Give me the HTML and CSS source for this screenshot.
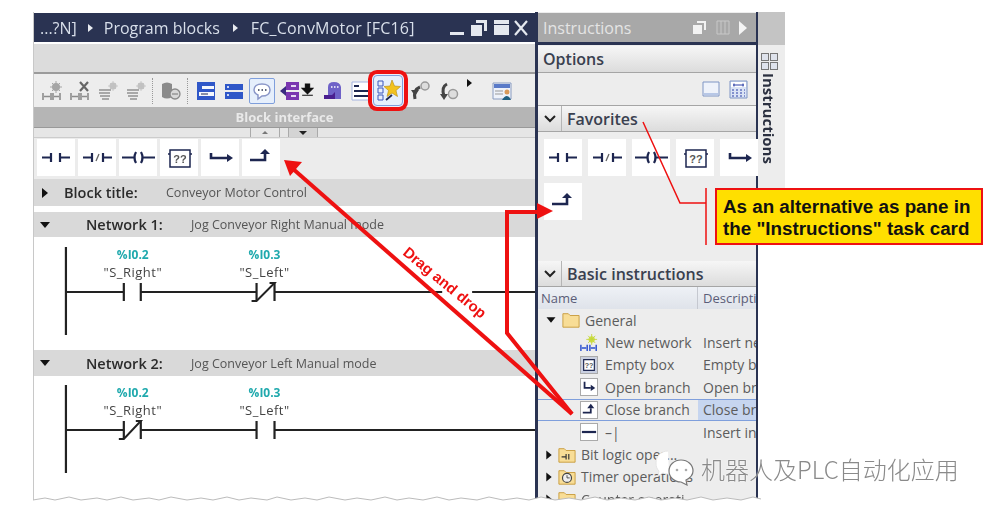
FILE: index.html
```html
<!DOCTYPE html>
<html lang="en">
<head>
    <meta charset="UTF-8">
    <title>Program blocks - FC_ConvMotor</title>
    <link rel="stylesheet" href="styles.css">
</head>
<body>
<svg class="defs" width="0" height="0">
    <symbol id="i-no" viewBox="0 0 38 37"><path d="M5 18.500h9M14 14v9M23 14v9M23 18.500h10" fill="none" stroke="#1d2650" stroke-width="2.200"/></symbol>
    <symbol id="i-nc" viewBox="0 0 38 37"><path d="M5 18.500h9M14 14v9M25 14v9M25 18.500h9" fill="none" stroke="#1d2650" stroke-width="2.200"/><path d="M18 22l3-7" stroke="#666" stroke-width="1.300"/></symbol>
    <symbol id="i-coil" viewBox="0 0 38 37"><path d="M3 18.500h12M24 18.500h12M17 13q-3 5.500 0 11M22 13q3 5.500 0 11" fill="none" stroke="#1d2650" stroke-width="2.200"/></symbol>
    <symbol id="i-box" viewBox="0 0 38 37"><path d="M10 11h20v17h-20zM8 15h2M30 15h2" fill="none" stroke="#1d2650" stroke-width="1.500"/><text x="20" y="24" class="box-text">??</text></symbol>
    <symbol id="i-open" viewBox="0 0 38 37"><path d="M10 14v5h16" fill="none" stroke="#1d2650" stroke-width="2.600"/><path d="M26 15l6 4-6 4z" fill="#1d2650"/></symbol>
    <symbol id="i-close" viewBox="0 0 38 37"><path d="M8 21h15v-6" fill="none" stroke="#1d2650" stroke-width="2.600"/><path d="M18 15l5-5 5 5z" fill="#1d2650"/></symbol>
    <symbol id="t-net" viewBox="0 0 20 20"><path d="M1 12v7M18 12v7M9 12v7M11 12v7" stroke="#8c8c8c" stroke-width="1.600" fill="none"/><path d="M2 15.500h6M12 15.500h5" stroke="#8c8c8c" stroke-width="1.600"/><circle cx="14" cy="6" r="4" fill="#a5a5a5"/><path d="M14 0v12M8 6h12M10 2l8 8M18 2l-8 8" stroke="#a5a5a5"/></symbol>
    <symbol id="t-netx" viewBox="0 0 20 20"><path d="M1 12v7M18 12v7M9 12v7M11 12v7" stroke="#8c8c8c" stroke-width="1.600" fill="none"/><path d="M2 15.500h6M12 15.500h5" stroke="#8c8c8c" stroke-width="1.600"/><path d="M10 1l8 9M18 1l-8 9" stroke="#666" stroke-width="2.200"/></symbol>
    <symbol id="t-lines" viewBox="0 0 20 20"><path d="M1 9h12M1 12h11M2 15h10M4 18h7" stroke="#a8a8a8" stroke-width="1.800"/><circle cx="15" cy="5" r="3.500" fill="#c2c2c2"/><path d="M15 0v10M10 5h10M12 2l6 6M18 2l-6 6" stroke="#c2c2c2" stroke-width=".8"/></symbol>
    <symbol id="t-db" viewBox="0 0 20 20"><path d="M1 3q5-3 10 0v13q-5 3-10 0z" fill="#8a8a8a"/><circle cx="14" cy="13" r="5" fill="#d8d8d8" stroke="#8a8a8a" stroke-width="1.300"/><path d="M11 13h6" stroke="#777"/></symbol>
    <symbol id="t-list" viewBox="0 0 20 20"><path d="M1 1h18v18h-18z" fill="#2f57c8"/><path d="M6 5h12v3h-12zM3 11h15v4h-15z" fill="#f4f7fd"/><path d="M5 13h7" stroke="#1d2650"/></symbol>
    <symbol id="t-list2" viewBox="0 0 20 20"><path d="M1 3h18v6h-18zM1 11h18v7h-18z" fill="#2f57c8"/><path d="M3 6h2M3 14h2" stroke="#fff" stroke-width="1.500"/></symbol>
    <symbol id="t-bubble" viewBox="0 0 20 20"><path d="M10 3c5 0 8 2.500 8 6s-3 6-8 6l-4 3v-4c-2-1-4-3-4-5 0-3.500 3-6 8-6z" fill="#fff" stroke="#8a96c8" stroke-width="1.500"/><path d="M6 9h1.500M9.500 9h1.500M13 9h1.500" stroke="#2a3352" stroke-width="1.500"/></symbol>
    <symbol id="t-tag" viewBox="0 0 20 20"><path d="M6 1h13v8h-13zM6 11h13v8h-13z" fill="#7a36b0"/><path d="M0 10l6-5v10z" fill="#3a2a80"/><path d="M11 5h5M11 15h5" stroke="#e6d8f2" stroke-width="2"/></symbol>
    <symbol id="t-ghost" viewBox="0 0 20 20"><path d="M5 6q0-5 6-5t7 5v12h-13z" fill="#6f62c8"/><path d="M8 6h1.500M11 6h1.500M14 6h1.500" stroke="#fff" stroke-width="1.500"/><path d="M1 14h8l3-3v7h-11z" fill="#4a1f90"/></symbol>
    <symbol id="t-lines2" viewBox="0 0 20 20"><path d="M1 1h18v18h-18z" fill="#fff" stroke="#a5b4e0"/><path d="M3 5h5M3 10h15M3 15h15" stroke="#1d2650" stroke-width="2"/></symbol>
    <symbol id="t-fav" viewBox="0 0 26 26"><path d="M3 3h5v5h-5zM3 10h5v5h-5zM3 17h5v5h-5z" fill="#e8eefb" stroke="#3a57bd"/><path d="M17 2l2.500 6 6 .500-4.500 4 1.500 6-5.500-3.500-5 3.500 1.500-6-4.500-4 6-.500z" fill="#f2c21f" stroke="#b58a10" stroke-width=".6"/><path d="M11 22l6-5" stroke="#1d2650" stroke-width="1.800"/></symbol>
    <symbol id="t-undo" viewBox="0 0 20 20"><path d="M4 18q-2-9 5-12" fill="none" stroke="#444" stroke-width="3"/><path d="M0 9h8l-4 6z" fill="#444"/><circle cx="14" cy="5" r="4" fill="#ddd" stroke="#999" stroke-width="1.500"/></symbol>
    <symbol id="t-redo" viewBox="0 0 20 20"><path d="M8 3q-6 3-3 12" fill="none" stroke="#444" stroke-width="3"/><path d="M1 13h8l-4 6z" fill="#444"/><circle cx="14" cy="13" r="4.500" fill="#ddd" stroke="#999" stroke-width="1.500"/></symbol>
    <symbol id="t-panel" viewBox="0 0 20 20"><path d="M1 2h18v16h-18z" fill="#eef2fa" stroke="#8a9cc0"/><path d="M2 3h16v4h-16z" fill="#5a7ac8"/><path d="M3 10h8M3 13h8" stroke="#999"/><circle cx="15" cy="11" r="2.500" fill="#d99a5a"/><path d="M10 19q5-8 9 0z" fill="#1f5f80"/></symbol>
    <symbol id="f-folder" viewBox="0 0 20 20"><path d="M1 3h6l2 2h10v13h-18z" fill="#f8dd96" stroke="#c79a3a"/></symbol>
</svg>

<div class="page">
    <div class="frame">
        <section class="editor">
            <header class="titlebar">
                <span class="crumb">...?N]</span><span class="crumb-arrow"></span>
                <span class="crumb">Program blocks</span><span class="crumb-arrow crumb-arrow-last"></span>
                <span class="crumb crumb-last">FC_ConvMotor [FC16]</span>
                <span class="win-btns">
                    <i class="win-min"></i>
                    <svg width="20" height="18" viewBox="0 0 20 18"><path d="M7 1h11v11h-3v-8h-8zM2 6h11v11h-11z" fill="#e4e8ef"/></svg>
                    <i class="win-max"></i>
                    <svg width="14" height="16" viewBox="0 0 14 16"><path d="M1 1l12 14M13 1l-12 14" stroke="#e4e8ef" stroke-width="2.200"/></svg>
                </span>
            </header>
            <div class="band"></div>
            <div class="toolbar">
                <svg class="tool"><use href="#t-net"/></svg>
                <svg class="tool"><use href="#t-netx"/></svg>
                <svg class="tool"><use href="#t-lines"/></svg>
                <svg class="tool"><use href="#t-lines"/></svg>
                <span class="sep"></span>
                <svg class="tool"><use href="#t-db"/></svg>
                <span class="sep"></span>
                <svg class="tool"><use href="#t-list"/></svg>
                <svg class="tool"><use href="#t-list2"/></svg>
                <span class="tool-on"><svg class="tool-in"><use href="#t-bubble"/></svg></span>
                <svg class="tool tool-tag"><use href="#t-tag"/></svg>
                <svg class="tool-load" viewBox="0 0 12 14"><path d="M4 1h4v4h3l-5 5-5-5h3zM1 11.500h10" fill="#111" stroke="#111"/></svg>
                <svg class="tool"><use href="#t-ghost"/></svg>
                <svg class="tool"><use href="#t-lines2"/></svg>
                <span class="tool-marked"><svg class="tool-star"><use href="#t-fav"/></svg></span>
                <svg class="tool"><use href="#t-undo"/></svg>
                <svg class="tool"><use href="#t-redo"/></svg>
                <i class="tool-more"></i>
                <svg class="tool"><use href="#t-panel"/></svg>
            </div>
            <div class="iface">Block interface</div>
            <div class="ruler"><span class="ruler-up"></span><span class="ruler-down"></span></div>
            <div class="favbar">
                <svg class="fav"><use href="#i-no"/></svg>
                <svg class="fav"><use href="#i-nc"/></svg>
                <svg class="fav"><use href="#i-coil"/></svg>
                <svg class="fav"><use href="#i-box"/></svg>
                <svg class="fav"><use href="#i-open"/></svg>
                <svg class="fav"><use href="#i-close"/></svg>
            </div>
            <div class="block-title">
                <i class="tri-right"></i><b>Block title:</b><span>Conveyor Motor Control</span>
            </div>
            <div class="net-head">
                <i class="tri-down"></i><b>Network 1:</b><span>Jog Conveyor Right Manual mode</span>
            </div>
            <svg class="ladder ladder-one" viewBox="0 0 502 113">
                <path class="wire" d="M32 10v88M32 55h58M107 55h116M241 55h168M439 55h63"/>
                <path class="wire" d="M90 46v18M107 46v18M223 46v18M241 46v18"/>
                <path class="wire-thin" d="M218 64h5l18-18h-5"/>
                <text x="99" y="22" class="addr">%I0.2</text>
                <text x="99" y="40" class="tag">"S_Right"</text>
                <text x="231" y="22" class="addr">%I0.3</text>
                <text x="231" y="40" class="tag">"S_Left"</text>
            </svg>
            <div class="net-head net-head-two">
                <i class="tri-down"></i><b>Network 2:</b><span>Jog Conveyor Left Manual mode</span>
            </div>
            <svg class="ladder ladder-two" viewBox="0 0 502 122">
                <path class="wire" d="M32 9v88M32 54h58M107 54h116M241 54h261"/>
                <path class="wire" d="M90 45v18M107 45v18M223 45v18M241 45v18"/>
                <path class="wire-thin" d="M85 63h5l17-18h-5"/>
                <text x="99" y="21" class="addr">%I0.2</text>
                <text x="99" y="39" class="tag">"S_Right"</text>
                <text x="231" y="21" class="addr">%I0.3</text>
                <text x="231" y="39" class="tag">"S_Left"</text>
            </svg>
        </section>

        <aside class="cards">
            <header class="cards-head">
                <span>Instructions</span>
                <span class="cards-btns">
                    <svg width="15" height="15" viewBox="0 0 15 15"><path d="M5 1h9v9h-2v-7h-7zM1 5h9v9h-9z" fill="#f2f2f2"/></svg>
                    <svg width="14" height="15" viewBox="0 0 14 15"><path d="M1 1h12v13h-12zM5 1v13M9 1v13" fill="none" stroke="#c8c8c8"/></svg>
                    <i class="cards-play"></i>
                </span>
            </header>
            <div class="pane-head options">Options</div>
            <div class="options-tools">
                <svg width="18" height="18" viewBox="0 0 18 18"><path d="M1 2h16v14h-16z" fill="#eef2fa" stroke="#7f95c4"/><path d="M2 13h14v2h-14z" fill="#b7c7e6"/></svg>
                <svg width="19" height="19" viewBox="0 0 19 19"><path d="M1 1h17v17h-17z" fill="#dbe4f5" stroke="#7f95c4"/><path d="M2 2h15v5h-15z" fill="#fff"/><path d="M4 5h11M5 3.500v3M14 3.500v3" stroke="#2b3fa5"/><path d="M3 10h2M7 10h2M11 10h2M15 10h1M3 13h2M7 13h2M11 13h2M15 13h1M3 16h2M7 16h2M11 16h2M15 16h1" stroke="#2b3fa5"/></svg>
            </div>
            <div class="pane-head fold"><span class="chev"><svg width="12" height="8" viewBox="0 0 12 8"><path d="M1 1l5 5 5-5" fill="none" stroke="#222" stroke-width="2"/></svg></span><span class="fold-name">Favorites</span></div>
            <div class="fav-grid">
                <svg class="fav"><use href="#i-no"/></svg>
                <svg class="fav"><use href="#i-nc"/></svg>
                <svg class="fav"><use href="#i-coil"/></svg>
                <svg class="fav"><use href="#i-box"/></svg>
                <svg class="fav"><use href="#i-open"/></svg>
                <svg class="fav"><use href="#i-close"/></svg>
            </div>
            <div class="pane-head fold fold-basic"><span class="chev"><svg width="12" height="8" viewBox="0 0 12 8"><path d="M1 1l5 5 5-5" fill="none" stroke="#222" stroke-width="2"/></svg></span><span class="fold-name">Basic instructions</span></div>
            <div class="table-head"><span class="col-name">Name</span><span class="col-desc">Descripti</span></div>
            <div class="row"><span class="col-name lvl0"><i class="tri-down small"></i><svg class="ico"><use href="#f-folder"/></svg>General</span></div>
            <div class="row"><span class="col-name lvl1"><svg class="ico" viewBox="0 0 20 20"><path d="M1 12v7M18 12v7M8 12v7M11 12v7" stroke="#2a4fd0" stroke-width="1.600"/><path d="M2 15.500h5M12 15.500h5" stroke="#2a4fd0" stroke-width="1.600"/><circle cx="13" cy="6" r="3.500" fill="#cfe04a"/><path d="M13 0v12M7 6h12M9 2l8 8M17 2l-8 8" stroke="#c4d63a"/></svg>New network</span><span class="col-desc">Insert ne</span></div>
            <div class="row"><span class="col-name lvl1"><svg class="ico ico-box ico-empty" viewBox="0 0 18 18"><path d="M3 3h12v12h-12z" fill="#fff" stroke="#1d2650" stroke-width="1.300"/><text x="9" y="12.500" class="ico-text">??</text></svg>Empty box</span><span class="col-desc">Empty b</span></div>
            <div class="row"><span class="col-name lvl1"><svg class="ico ico-box" viewBox="0 0 18 18"><path d="M4 3v7h7" fill="none" stroke="#1d2650" stroke-width="2"/><path d="M11 6.500l5 3.500-5 3.500z" fill="#1d2650"/></svg>Open branch</span><span class="col-desc">Open br</span></div>
            <div class="row row-sel"><span class="col-name lvl1"><svg class="ico ico-box" viewBox="0 0 18 18"><path d="M2 12h9v-5" fill="none" stroke="#1d2650" stroke-width="2"/><path d="M7 7l4-5 4 5z" fill="#1d2650"/></svg>Close branch</span><span class="col-desc">Close br</span></div>
            <div class="row"><span class="col-name lvl1"><svg class="ico ico-box" viewBox="0 0 18 18"><path d="M1 9h16" stroke="#1d2650" stroke-width="2.500"/></svg>&#8211;|</span><span class="col-desc">Insert in</span></div>
            <div class="row"><span class="col-name lvl0"><i class="tri-right small"></i><svg class="ico" viewBox="0 0 20 20"><use href="#f-folder"/><path d="M4 12h5M9 9v6M12 9v6" stroke="#333" stroke-width="1.300"/></svg>Bit logic oper...</span></div>
            <div class="row"><span class="col-name lvl0"><i class="tri-right small"></i><svg class="ico" viewBox="0 0 20 20"><use href="#f-folder"/><circle cx="10" cy="11" r="5" fill="#eee" stroke="#444" stroke-width="1.300"/><path d="M10 8v3h3" stroke="#444" fill="none"/></svg>Timer operations</span></div>
            <div class="row"><span class="col-name lvl0"><i class="tri-right small"></i><svg class="ico"><use href="#f-folder"/></svg>Counter operati...</span></div>
        </aside>

        <div class="sidetab">
            <div class="sidetab-btns"><i></i><i></i><i></i><i></i></div>
            <span class="sidetab-label">Instructions</span>
        </div>
    </div>

    <!-- annotations drawn over the screenshot -->
    <svg class="marks" width="992" height="512" viewBox="0 0 992 512">
        <path class="torn-fill" d="M33 500l12-2 10 2 14-3 12 3 16-2 10 2 14-3 12 3 16-2 10 2 12-3 16 3 14-2 12 2 14-3 12 3 12-2 16 2 10-3 14 3 14-2 12 2 12-3 16 3 12-2 14 2 14-3 12 3 12-2 14 2 14-3 12 3 12-2 16 2 12-3 14 3 14-2 12 2 12-3 14 3 14-2 12 2 14-3 12 3 14-2 14 2 14-3 12 3 14-2 12 2 14-3 12 3 14-2 14 2 12-3 8 2V512H33z"/>
        <path class="torn-edge" d="M33 500l12-2 10 2 14-3 12 3 16-2 10 2 14-3 12 3 16-2 10 2 12-3 16 3 14-2 12 2 14-3 12 3 12-2 16 2 10-3 14 3 14-2 12 2 12-3 16 3 12-2 14 2 14-3 12 3 12-2 14 2 14-3 12 3 12-2 16 2 12-3 14 3 14-2 12 2 12-3 14 3 14-2 12 2 14-3 12 3 14-2 14 2 14-3 12 3 14-2 12 2 14-3 12 3 14-2 14 2 12-3 8 2"/>
        <path class="red" d="M292 168L572 414"/>
        <path class="red" d="M572 414L507 333V212H540"/>
        <path class="red-fill" d="M284 160l18 2-12 14z"/>
        <path class="red-fill" d="M553 211l-16-8v16z"/>
        <path class="red-thin" d="M643 122L680 203H706M706 188V245"/>
        <text class="drag" transform="translate(402 254) rotate(39.500)">Drag and drop</text>
    </svg>
    <div class="callout">As an alternative as pane in<br>the "Instructions" task card</div>
    <div class="watermark">
        <svg width="40" height="36" viewBox="0 0 40 36"><path d="M13 1C6 1 1 6 1 13c0 4 1 6 3 8l-1 5 5-3c2 1 4 1 6 1" fill="#fff" stroke="#e4e4e4"/><path d="M26 10c-7 0-12 5-12 11s5 11 12 11l6 3-1-5c4-2 7-5 7-9 0-6-5-11-12-11z" fill="#fff" stroke="#777" stroke-width="1.200"/><circle cx="22" cy="20" r="1.300" fill="#aaa"/><circle cx="31" cy="20" r="1.300" fill="#aaa"/></svg>
        <span>机器人及PLC自动化应用</span>
    </div>
</div>
</body>
</html>
```
FILE: styles.css
```css
body {
    margin: 0;
    background: #fff;
    font-family: "Open Sans", Arial, sans-serif;
}
i {
    display: block;
}
.defs {
    position: absolute;
}
.page {
    position: relative;
    width: 992px;
    height: 512px;
    overflow: hidden;
    filter: blur(0.5px);
}
.frame {
    display: flex;
    margin: 12px 0 0 33px;
    width: 752px;
    height: 488px;
    overflow: hidden;
}

/* left: block editor */
.editor {
    width: 502px;
    flex: none;
    border-left: 1px solid #c8c8c8;
    box-sizing: border-box;
    padding-top: 1px;
}
.titlebar {
    display: flex;
    align-items: center;
    height: 29px;
    background: #2a3352;
    color: #d8dfea;
    font-size: 16px;
    padding-left: 6px;
    margin-bottom: 2px;
}
.crumb-arrow {
    width: 0;
    height: 0;
    margin: 0 11px;
    border-left: 5px solid #e8ebf0;
    border-top: 4px solid transparent;
    border-bottom: 4px solid transparent;
}
.crumb-arrow-last {
    margin: 0 13px 0 13px;
}
.crumb-last {
    letter-spacing: 0.2px;
}
.win-btns {
    display: flex;
    align-items: center;
    gap: 5px;
    margin-left: auto;
    margin-right: 7px;
}
.win-min {
    width: 14px;
    height: 3px;
    margin-top: 12px;
    background: #e4e8ef;
}
.win-max {
    width: 15px;
    height: 15px;
    background: linear-gradient(#e4e8ef 4px, #2a3352 4px, #2a3352 5px, #e4e8ef 5px);
}
.band {
    height: 28px;
    background: #dcdcdc;
    border-bottom: 2px solid #9b9b9b;
}
.toolbar {
    display: flex;
    align-items: center;
    height: 33px;
    padding-left: 8px;
    background: #ededed;
}
.tool {
    width: 20px;
    height: 20px;
    margin-right: 8px;
    flex: none;
}
.sep {
    width: 0;
    height: 26px;
    border-left: 1px dotted #999;
    margin: 0 8px 0 -2px;
}
.tool-on {
    display: flex;
    align-items: center;
    justify-content: center;
    width: 24px;
    height: 24px;
    margin: 0 5px 0 -3px;
    background: #e6effc;
    border: 1px solid #7f9fdc;
    border-radius: 2px;
}
.tool-in {
    width: 20px;
    height: 20px;
}
.tool-tag {
    margin-right: 1px;
}
.tool-load {
    width: 13px;
    height: 15px;
    margin-right: 9px;
    flex: none;
}
.tool-marked {
    display: flex;
    align-items: center;
    justify-content: center;
    width: 28px;
    height: 29px;
    margin: 0 8px 0 -6px;
    background: #e6effc;
    border: 1px solid #7f9fdc;
    box-shadow: 0 0 0 1px #e9effb, 0 0 0 5px #ee1111;
    border-radius: 4px;
}
.tool-star {
    width: 26px;
    height: 26px;
}
.tool-more {
    width: 0;
    height: 0;
    margin: -16px 20px 0 0;
    border-left: 5px solid #111;
    border-top: 4px solid transparent;
    border-bottom: 4px solid transparent;
}
.iface {
    height: 20px;
    line-height: 20px;
    background: #b5b5b5;
    color: #e9e9e9;
    font-size: 13px;
    font-weight: 700;
    text-align: center;
}
.ruler {
    display: flex;
    height: 9px;
    padding-left: 216px;
    background: #e6e6e6;
    border-top: 1px solid #999;
    border-bottom: 1px solid #ccc;
}
.ruler span {
    display: flex;
    align-items: center;
    justify-content: center;
    width: 28px;
    border-left: 1px solid #aaa;
    border-right: 1px solid #aaa;
}
.ruler .ruler-down {
    width: 28px;
    margin-left: 8px;
    background: #d4d4d4;
}
.ruler-up::after {
    content: "";
    border-bottom: 3px solid #777;
    border-left: 3px solid transparent;
    border-right: 3px solid transparent;
}
.ruler-down::after {
    content: "";
    border-top: 4px solid #222;
    border-left: 4px solid transparent;
    border-right: 4px solid transparent;
}
.favbar {
    display: flex;
    gap: 3px;
    height: 41px;
    padding: 1px 0 0 3px;
    box-sizing: border-box;
    background: #ececec;
}
.fav {
    width: 38px;
    height: 37px;
    flex: none;
    background: #fff;
}
.box-text {
    font: 700 11px "Liberation Sans", sans-serif;
    fill: #555;
    text-anchor: middle;
}
.block-title, .net-head {
    display: flex;
    align-items: center;
    background: #d9d9d9;
    font-size: 12.500px;
    color: #555;
}
.block-title {
    height: 27px;
    margin-bottom: 6px;
    padding-left: 8px;
}
.block-title b, .net-head b {
    font-size: 14.500px;
    font-weight: 600;
    color: #2b2b2b;
}
.block-title b {
    width: 102px;
    margin-left: 16px;
}
.net-head {
    height: 25px;
    padding-left: 6px;
}
.net-head b {
    width: 105px;
    margin-left: 36px;
    flex: none;
}
.net-head-two {
    height: 26px;
}
.tri-right {
    width: 0;
    height: 0;
    border-left: 6px solid #111;
    border-top: 5px solid transparent;
    border-bottom: 5px solid transparent;
}
.tri-down {
    width: 0;
    height: 0;
    border-top: 6px solid #111;
    border-left: 5.500px solid transparent;
    border-right: 5.500px solid transparent;
}
.ladder {
    display: block;
    width: 501px;
    background: #fff;
}
.ladder-one {
    height: 113px;
}
.ladder-two {
    height: 122px;
}
.wire {
    fill: none;
    stroke: #222;
    stroke-width: 2.200;
}
.wire-thin {
    fill: none;
    stroke: #222;
    stroke-width: 2;
}
.addr {
    font: 700 12px "Open Sans", sans-serif;
    fill: #1fa9ad;
    text-anchor: middle;
}
.tag {
    font: 13px "Open Sans", sans-serif;
    letter-spacing: 0.5px;
    fill: #444;
    text-anchor: middle;
}

/* right: task card */
.cards {
    width: 223px;
    flex: none;
    box-sizing: border-box;
    padding-top: 1px;
    background: #ededed;
    border-left: 3px solid #2a3352;
    border-right: 2px solid #2a3352;
}
.cards-head {
    display: flex;
    align-items: center;
    height: 29px;
    padding-left: 5px;
    background: #a8a8a8;
    color: #e4e4e4;
    font-size: 16px;
    border-bottom: 3px solid #2a3352;
}
.cards-btns {
    display: flex;
    align-items: center;
    gap: 9px;
    margin-left: auto;
    margin-right: 9px;
}
.cards-play {
    width: 0;
    height: 0;
    border-left: 8px solid #f4f4f4;
    border-top: 7px solid transparent;
    border-bottom: 7px solid transparent;
}
.pane-head {
    display: flex;
    align-items: center;
    height: 26px;
    background: linear-gradient(#f6f6f6, #dcdcdc);
    border-bottom: 1px solid #a5a5a5;
    color: #39404f;
    font-size: 16px;
    font-weight: 600;
}
.options {
    margin-top: 1px;
    padding-left: 5px;
}
.options-tools {
    display: flex;
    align-items: center;
    justify-content: flex-end;
    gap: 9px;
    height: 32px;
    padding-right: 8px;
    border-bottom: 1px solid #a5a5a5;
}
.fold {
    height: 25px;
}
.chev {
    display: flex;
    align-items: center;
    justify-content: center;
    width: 23px;
    height: 100%;
    border-right: 1px solid #b5b5b5;
    margin-right: 5px;
}
.fav-grid {
    display: flex;
    flex-wrap: wrap;
    align-content: flex-start;
    gap: 7px 6px;
    width: 240px;
    height: 127px;
    padding: 7px 0 0 6px;
    box-sizing: border-box;
}
.fold-basic {
    margin-top: 2px;
}
.table-head {
    display: flex;
    align-items: center;
    height: 22px;
    background: linear-gradient(#eef1f6, #dfe3ea);
    color: #5b5d78;
    font-size: 13px;
}
.table-head .col-name {
    padding-left: 3px;
    align-self: stretch;
    display: flex;
    align-items: center;
    border-right: 1px solid #c5c8d0;
}
.col-name {
    display: flex;
    align-items: center;
    width: 160px;
    flex: none;
    box-sizing: border-box;
    white-space: nowrap;
}
.col-desc {
    padding-left: 5px;
    white-space: nowrap;
    overflow: hidden;
}
.row {
    display: flex;
    align-items: center;
    height: 22.400px;
    font-size: 14px;
    color: #5c5c5c;
}
.lvl0 {
    padding-left: 8px;
}
.lvl0 .ico {
    margin: 0 5px 0 6px;
}
.lvl1 {
    padding-left: 42px;
}
.lvl1 .ico {
    margin-right: 7px;
}
.small {
    flex: none;
    transform: scale(0.9);
}
.ico {
    width: 18px;
    height: 18px;
    flex: none;
}
.ico-box {
    background: #fff;
    box-sizing: border-box;
    border: 1px solid #aaa;
}
.ico-empty {
    background: #c9cfe0;
}
.ico-text {
    font: 700 8px "Liberation Sans", sans-serif;
    fill: #555;
    text-anchor: middle;
}
.row-sel {
    border-top: 1px solid #7f9fdc;
    border-bottom: 1px solid #7f9fdc;
    box-sizing: border-box;
}
.row-sel .col-desc {
    align-self: stretch;
    flex: 1;
    display: flex;
    align-items: center;
    background: #c6d5ef;
}

/* far right: collapsed tab */
.sidetab {
    width: 27px;
    height: 233px;
    flex: none;
    background: linear-gradient(#c4c4c4 33px, #ededed 33px);
    border-right: 1px solid #ddd;
}
.sidetab-btns {
    display: grid;
    grid-template-columns: 8px 8px;
    gap: 1px;
    padding: 41px 0 0 3px;
}
.sidetab-btns i {
    height: 8px;
    background: #dfe3ec;
    border: 1px solid #777;
    box-sizing: border-box;
}
.sidetab-label {
    display: block;
    margin: 3px 0 0 1px;
    writing-mode: vertical-rl;
    font-size: 15px;
    font-weight: 700;
    color: #2b3040;
}

/* annotations */
.marks {
    position: absolute;
    left: 0;
    top: 0;
}
.torn-fill {
    fill: #fff;
}
.torn-edge {
    fill: none;
    stroke: #bbb;
}
.red {
    fill: none;
    stroke: #ee1111;
    stroke-width: 4;
}
.red-thin {
    fill: none;
    stroke: #ee1111;
    stroke-width: 1.500;
}
.red-fill {
    fill: #ee1111;
}
.drag {
    font: 700 15px "Liberation Sans", Arial, sans-serif;
    fill: #ee1111;
}
.callout {
    position: absolute;
    left: 715px;
    top: 188px;
    width: 268px;
    height: 57px;
    box-sizing: border-box;
    padding: 6px 0 0 6px;
    background: #ffdf00;
    border: 2px solid #ee1111;
    font: 700 18.800px/22px "Liberation Sans", Arial, sans-serif;
    color: #111;
    white-space: nowrap;
}
.watermark {
    position: absolute;
    left: 655px;
    top: 450px;
    display: flex;
    align-items: center;
    gap: 6px;
    font: 300 24px "Noto Sans CJK SC", "Noto Sans", sans-serif;
    color: #8a8a8a;
    text-shadow: 0 0 2px #fff;
}
```
